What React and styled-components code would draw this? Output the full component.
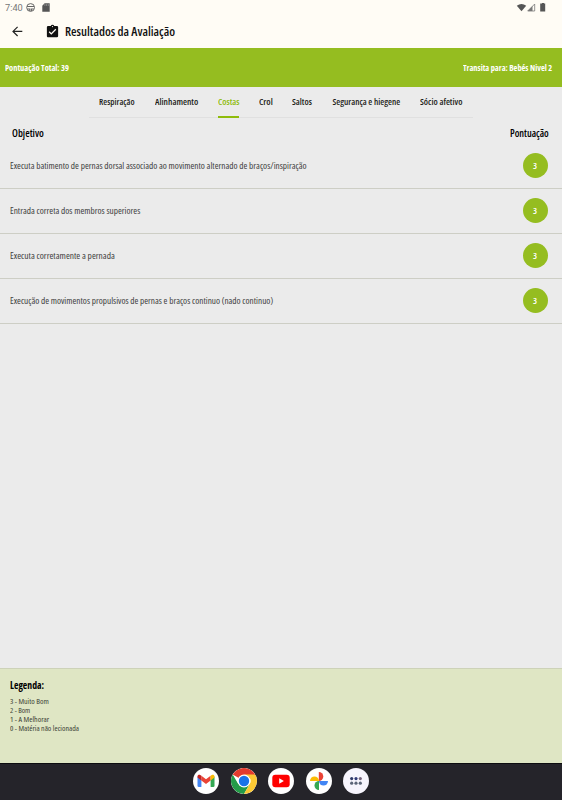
import React, { useLayoutEffect, useRef, useState } from 'react';
import styled, { createGlobalStyle } from 'styled-components';

const GlobalStyle = createGlobalStyle`
  * {
    box-sizing: border-box;
  }

  body {
    margin: 0;
    background-color: #ebebeb;
    font-family: 'Ubuntu Condensed', 'Open Sans', 'Noto Sans', sans-serif;
    font-stretch: 75%;
    color: #111;
  }
`;

const Screen = styled.div`
  display: flex;
  flex-direction: column;
  height: 800px;
  overflow: hidden;
`;

const StatusBar = styled.div`
  display: flex;
  justify-content: space-between;
  height: 16px;
  padding: 0 16px 0 5px;
  background-color: #fffcf5;
  color: #777;
  font-family: Roboto, sans-serif;
  font-size: 9.5px;
  font-stretch: 100%;
  line-height: 15px;
`;

const StatusIcons = styled.div`
  display: flex;
  height: 15px;

  svg {
    display: block;
  }
`;

const Header = styled.header`
  display: flex;
  align-items: center;
  height: 32px;
  padding: 0 0 1px 10px;
  background-color: #fffcf5;
  font-size: 12.8px;
  font-weight: 600;
  line-height: 17px;

  svg {
    display: block;
  }
`;

const BackButton = styled.button`
  width: 15px;
  height: 15px;
  margin-right: 20px;
  padding: 0;
  border: 0;
  background: none;
`;

const HeaderTitle = styled.div`
  display: flex;
  align-items: center;
  gap: 5px;
`;

const Summary = styled.div`
  display: flex;
  align-items: center;
  justify-content: space-between;
  height: 39px;
  padding: 0 10px 1px 5px;
  background-color: #95bd20;
  color: #fff;
  font-size: 9px;
  font-weight: 700;
`;

const Tabs = styled.nav`
  display: flex;
  align-self: center;
  height: 31px;
  border-bottom: 1px solid #e0e0e0;
`;

const Tab = styled.div`
  position: relative;
  display: flex;
  align-items: center;
  height: 31px;
  padding: 0 10px 2px;
  color: ${({ $active }) => ($active ? '#8fbc0c' : '#1d1d18')};
  font-size: 9px;
  font-weight: 600;

  &::after {
    content: '';
    position: absolute;
    right: 10px;
    bottom: 0;
    left: 10px;
    height: 2px;
    background-color: ${({ $active }) => ($active ? '#8fbc0c' : 'transparent')};
  }
`;

const TableHead = styled.div`
  display: flex;
  align-items: center;
  justify-content: space-between;
  height: 26px;
  padding: 3px 13px 0 12px;
  color: #000;
  font-size: 10px;
  font-weight: 600;
`;

const Row = styled.div`
  display: flex;
  align-items: center;
  justify-content: space-between;
  height: 45px;
  padding: 0 14.5px 0.4px 10px;
  border-bottom: 1px solid #cdcec5;
  color: #3c3c3c;
  font-size: 8.8px;
  line-height: 12px;
`;

const Score = styled.div`
  display: flex;
  align-items: center;
  justify-content: center;
  width: 25px;
  height: 25px;
  border-radius: 50%;
  background-color: #95bd20;
  color: #fff;
  font-size: 9px;
  font-weight: 600;
`;

const Legend = styled.section`
  height: 95px;
  margin-top: auto;
  padding: 9px 10px;
  border-top: 1px solid #cdd2b8;
  background-color: #dfe6c4;
`;

const LegendTitle = styled.div`
  height: 19.2px;
  color: #000;
  font-size: 10px;
  font-weight: 700;
  line-height: 15px;
`;

const LegendItem = styled.div`
  height: 8.8px;
  color: #3c3f35;
  font-size: 7.8px;
  line-height: 8.8px;
`;

const Dock = styled.footer`
  display: flex;
  align-items: center;
  justify-content: center;
  gap: 11.5px;
  height: 37px;
  padding-bottom: 2px;
  border-top: 1px solid #0d0d10;
  background-color: #25242a;
`;

const AppIcon = styled.div`
  width: 26px;
  height: 26px;
  overflow: hidden;
  border-radius: 50%;
  background-color: ${({ $bg }) => $bg || '#fff'};

  svg {
    display: block;
  }
`;

const Label = styled.span`
  display: block;
  flex: none;
  white-space: nowrap;
`;

const LabelText = styled.span`
  display: inline-block;
  vertical-align: top;
  transform-origin: 0 50%;
`;

// Squeezes a text to a condensed width
const Condensed = ({ width, children }) => {
  const textRef = useRef(null);
  const [scale, setScale] = useState(1);

  useLayoutEffect(() => {
    setScale(width / textRef.current.offsetWidth);
  }, [width]);

  return (
    <Label style={{ width }}>
      <LabelText ref={textRef} style={{ transform: `scaleX(${scale})` }}>
        {children}
      </LabelText>
    </Label>
  );
};

const tabs = [
  { name: 'Respiração', width: 35.5 },
  { name: 'Alinhamento', width: 43 },
  { name: 'Costas', width: 21.3 },
  { name: 'Crol', width: 13.5 },
  { name: 'Saltos', width: 20.2 },
  { name: 'Segurança e hiegene', width: 68 },
  { name: 'Sócio afetivo', width: 42.5 },
];

const goals = [
  {
    text: 'Executa batimento de pernas dorsal associado ao movimento alternado de braços/inspiração',
    width: 297,
    score: 3,
  },
  { text: 'Entrada correta dos membros superiores', width: 130.5, score: 3 },
  { text: 'Executa corretamente a pernada', width: 104.5, score: 3 },
  {
    text: 'Execução de movimentos propulsivos de pernas e braços continuo (nado continuo)',
    width: 263.5,
    score: 3,
  },
];

const legend = [
  { text: '3 - Muito Bom', width: 38.5 },
  { text: '2 - Bom', width: 20.5 },
  { text: '1 - A Melhorar', width: 38.8 },
  { text: '0 - Matéria não lecionada', width: 69.5 },
];

const NotificationIcons = () => (
  <svg width="26" height="15" viewBox="0 0 26 15">
    <circle cx="5.6" cy="7.5" r="3.9" fill="none" stroke="#666" strokeWidth="1" />
    <path d="M2.1 6.5h7M2.6 9h2.2v2M8.6 9H6.4v2" fill="none" stroke="#666" strokeWidth="1.1" />
    <path d="M19.6 3.3h5.1v8.4h-7.4V5.8z" fill="#555" />
    <path d="M19.9 4.2v1.6M21.6 4.2v1.6M23.3 4.2v1.6" stroke="#bbb" strokeWidth=".6" />
  </svg>
);

const SystemIcons = () => (
  <svg width="30" height="15" viewBox="0 0 30 15">
    <path d="M.8 5.7Q5.5 2.2 10.2 5.7L5.5 11.2z" fill="#555" />
    <path d="M18.7 4v7h-7z" fill="none" stroke="#777" strokeWidth=".8" />
    <path d="M16.5 6v5h-4.8z" fill="#777" />
    <path d="M25 3.5h1V3h2v.5h1.2v8H24.2v-8z" fill="#555" />
  </svg>
);

const BackIcon = () => (
  <svg width="15" height="15" viewBox="0 0 15 15">
    <path
      d="M12.3 7.4H3M7.6 2.8L3 7.4l4.6 4.6"
      fill="none"
      stroke="#222"
      strokeWidth="1.2"
    />
  </svg>
);

const TaskIcon = () => (
  <svg width="15" height="15" viewBox="0 0 24 24">
    <path
      fill="#111"
      d="M19 3h-4.2a3 3 0 0 0-5.6 0H5a2 2 0 0 0-2 2v14c0 1.1.9 2 2 2h14a2 2 0 0 0 2-2V5a2 2 0 0 0-2-2zm-7 0a1 1 0 1 1 0 2 1 1 0 0 1 0-2zm-2 14l-4-4 1.4-1.4 2.6 2.6 6.6-6.6L18 9z"
    />
  </svg>
);

const GmailIcon = () => (
  <svg width="26" height="26" viewBox="0 0 26 26">
    <path d="M4.5 8.5v9.2q0 1.3 1.3 1.3h2.6v-7.7z" fill="#4285f4" />
    <path d="M17.6 11.3V19h2.6q1.3 0 1.3-1.3V8.5z" fill="#34a853" />
    <path d="M8.4 7.8L13 11.3l4.6-3.5v4.7L13 16l-4.6-3.5z" fill="#ea4335" />
    <path d="M4.5 9.6V8.5C4.5 6.6 6.5 6.3 7.6 7.2l.8.6v4.7z" fill="#c5221f" />
    <path d="M17.6 12.5V7.8l.8-.6c1.1-.9 3.1-.6 3.1 1.3v1.1z" fill="#fbbc04" />
  </svg>
);

const ChromeIcon = () => (
  <svg width="26" height="26" viewBox="0 0 26 26">
    <path d="M13 13L1.7 6.5A13 13 0 0 1 24.3 6.5z" fill="#e33b2e" />
    <path d="M1.7 6.5A13 13 0 0 0 13 26l5.6-9.7L13 13l-5.6 3.3z" fill="#249b48" />
    <path d="M24.3 6.5A13 13 0 0 1 13 26l5.6-9.7a6.5 6.5 0 0 0-.2-6.8L13 6.5z" fill="#fcc934" />
    <circle cx="13" cy="13" r="6.5" fill="#fff" />
    <circle cx="13" cy="13" r="5.2" fill="#1a73e8" />
  </svg>
);

const YoutubeIcon = () => (
  <svg width="26" height="26" viewBox="0 0 26 26">
    <rect x="4.3" y="6.8" width="17.4" height="12.4" rx="3" fill="#f00" />
    <path d="M11.2 10.2v5.6l4.7-2.8z" fill="#fff" />
  </svg>
);

const PhotosIcon = () => (
  <svg width="26" height="26" viewBox="0 0 26 26">
    <path d="M12.8 4a4.5 4.5 0 0 1 0 9z" fill="#ea4335" />
    <path d="M22 13a4.5 4.5 0 0 1-9 0z" fill="#4285f4" />
    <path d="M13 22a4.5 4.5 0 0 1 0-9z" fill="#34a853" />
    <path d="M4 13a4.5 4.5 0 0 1 9 0z" fill="#fbbc04" />
  </svg>
);

const AppsIcon = () => (
  <svg width="26" height="26" viewBox="0 0 26 26">
    <circle cx="8.7" cy="10.6" r="1.6" fill="#303a68" />
    <circle cx="13" cy="10.6" r="1.6" fill="#303a78" />
    <circle cx="17.3" cy="10.6" r="1.6" fill="#76657c" />
    <circle cx="8.7" cy="15.2" r="1.6" fill="#5c6578" />
    <circle cx="13" cy="15.2" r="1.6" fill="#5c6578" />
    <circle cx="17.3" cy="15.2" r="1.6" fill="#5c6578" />
  </svg>
);

const App = () => {
  return (
    <Screen>
      <GlobalStyle />
      <StatusBar>
        <StatusIcons>
          <Condensed width={17.5}>7:40</Condensed>
          <Label>&nbsp;</Label>
          <NotificationIcons />
        </StatusIcons>
        <StatusIcons>
          <SystemIcons />
        </StatusIcons>
      </StatusBar>
      <Header>
        <BackButton aria-label="Voltar">
          <BackIcon />
        </BackButton>
        <HeaderTitle>
          <TaskIcon />
          <Condensed width={110}>Resultados da Avaliação</Condensed>
        </HeaderTitle>
      </Header>
      <Summary>
        <Condensed width={63.5}>Pontuação Total: 39</Condensed>
        <Condensed width={89}>Transita para: Bebés Nivel 2</Condensed>
      </Summary>
      <Tabs>
        {tabs.map(({ name, width }) => (
          <Tab key={name} $active={name === 'Costas'}>
            <Condensed width={width}>{name}</Condensed>
          </Tab>
        ))}
      </Tabs>
      <TableHead>
        <Condensed width={32}>Objetivo</Condensed>
        <Condensed width={39}>Pontuação</Condensed>
      </TableHead>
      {goals.map(({ text, width, score }) => (
        <Row key={text}>
          <Condensed width={width}>{text}</Condensed>
          <Score>
            <Condensed width={4}>{score}</Condensed>
          </Score>
        </Row>
      ))}
      <Legend>
        <LegendTitle>
          <Condensed width={34}>Legenda:</Condensed>
        </LegendTitle>
        {legend.map(({ text, width }) => (
          <LegendItem key={text}>
            <Condensed width={width}>{text}</Condensed>
          </LegendItem>
        ))}
      </Legend>
      <Dock>
        <AppIcon>
          <GmailIcon />
        </AppIcon>
        <AppIcon>
          <ChromeIcon />
        </AppIcon>
        <AppIcon>
          <YoutubeIcon />
        </AppIcon>
        <AppIcon>
          <PhotosIcon />
        </AppIcon>
        <AppIcon $bg="#f7f5fd">
          <AppsIcon />
        </AppIcon>
      </Dock>
    </Screen>
  );
};

export default App;
